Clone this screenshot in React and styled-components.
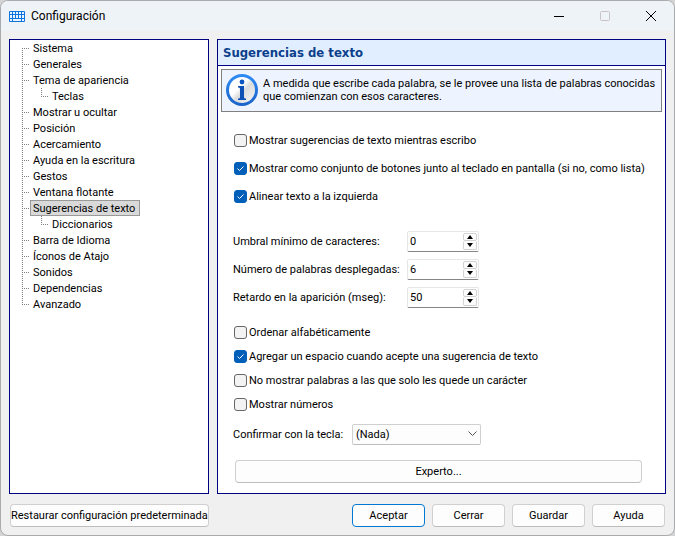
import React, { useState } from "react";
import styled, { createGlobalStyle } from "styled-components";

const GlobalStyle = createGlobalStyle`
  * {
    box-sizing: border-box;
  }

  body {
    margin: 0;
    background-color: #d4d4d4;
    font-family: Roboto, "Liberation Sans", sans-serif;
    font-size: 11px;
    line-height: 13px;
    color: #000;
  }

  button, input, select {
    font: inherit;
    color: inherit;
    margin: 0;
  }
`;

const StyledWindow = styled.div`
  min-height: 100vh;
  display: flex;
  flex-direction: column;
  background-color: #f0f0f0;
  border: 1px solid #a9abad;
  border-radius: 8px;
  overflow: hidden;
`;

const StyledTitleBar = styled.header`
  display: flex;
  align-items: center;
  height: 30px;
  padding-left: 8px;
  background-color: #eef3f8;
`;

const StyledTitle = styled.h1`
  flex: 1;
  margin: 0 0 0 6px;
  font-size: 12px;
  font-weight: 400;
  line-height: 16px;
`;

const StyledCaptionButton = styled.button`
  width: 46px;
  height: 30px;
  padding: 0;
  display: grid;
  place-items: center;
  border: 0;
  background: none;
  color: ${(props) => (props.disabled ? "#c8c2c4" : "#000")};
`;

const StyledBody = styled.main`
  flex: 1;
  display: flex;
  gap: 8px;
  padding: 8px 8px 0;
`;

const StyledTree = styled.ul`
  width: 200px;
  margin: 0;
  padding: 0 0 0 12px;
  list-style: none;
  background-color: #fff;
  border: 1px solid #000080;
`;

const StyledTreeItem = styled.li`
  display: flex;
  height: 16px;
  cursor: default;
`;

const dots = (direction) =>
  `repeating-linear-gradient(to ${direction}, #808080 0 1px, transparent 1px 2px)`;

const StyledTreeGuide = styled.span`
  width: 19px;
  background: ${dots("bottom")} 0 0 / 1px 100% no-repeat;
`;

const StyledTreeElbow = styled.span`
  width: 8px;
  background-image: ${dots("bottom")}, ${dots("right")};
  background-repeat: no-repeat;
  background-position: 0 ${(props) => (props.$shape === "first" ? "100%" : "0")}, 0 8px;
  background-size: 1px ${(props) => (props.$shape === "middle" ? "100%" : "50%")}, 100% 1px;
`;

const StyledTreeLabel = styled.span`
  padding: 0 4px 0 2px;
  line-height: 15px;
  white-space: nowrap;
  border: 1px solid ${(props) => (props.$selected ? "#999" : "transparent")};
  background-color: ${(props) => (props.$selected ? "#d9d9d9" : "transparent")};
`;

const StyledPanel = styled.section`
  flex: 1;
  min-width: 0;
  background-color: #fff;
  border: 1px solid #000080;
`;

const StyledPanelTitle = styled.h2`
  margin: 0;
  padding: 4px 5px;
  font-family: "DejaVu Sans Condensed", "DejaVu Sans", sans-serif;
  font-size: 13px;
  font-weight: 700;
  line-height: 17px;
  color: #0b3f8c;
  background-color: #e1eeff;
  border-bottom: 1px solid #000080;
`;

const StyledInfo = styled.div`
  display: flex;
  align-items: center;
  gap: 5px;
  margin: 3px;
  padding: 4px 4px 5px;
  background-color: #eef4ff;
  border: 1px solid #808080;

  > svg {
    flex: none;
  }

  > p {
    margin: 0;
  }
`;

const StyledForm = styled.form`
  display: flex;
  flex-direction: column;
  padding: 11px 15px 8px;
`;

const StyledGroup = styled.div`
  display: grid;
  grid-auto-rows: ${(props) => props.$row}px;
  margin-bottom: ${(props) => props.$gap}px;
`;

const StyledCheck = styled.label`
  display: flex;
  align-items: center;
  gap: 2px;
  margin-left: 1px;
`;

const StyledCheckMark = styled.span`
  display: grid;

  > * {
    grid-area: 1 / 1;
  }

  > input {
    appearance: none;
    width: 13px;
    height: 13px;
    border: 1px solid #666;
    border-radius: 3px;
    background-color: #f3f3f3;
  }

  > input:checked {
    border-color: #005fb8;
    background-color: #005fb8;
  }

  > svg {
    pointer-events: none;
    visibility: hidden;
  }

  > input:checked + svg {
    visibility: visible;
  }
`;

const StyledField = styled.div`
  display: grid;
  grid-template-columns: ${(props) => props.$label}px ${(props) => props.$control}px;
  align-items: center;
`;

const StyledSpin = styled.div`
  display: flex;
  height: 21px;
  padding: 1px;
  border: 1px solid #e6e6e6;
  border-bottom-color: #868686;
  border-radius: 2px;
  background-color: #fff;

  > input {
    flex: 1;
    min-width: 0;
    padding: 0 0 0 1px;
    border: 0;
    outline: 0;
    background: none;
    appearance: textfield;
  }

  > input::-webkit-inner-spin-button {
    display: none;
  }
`;

const StyledSpinButtons = styled.div`
  width: 14px;
  display: grid;
  grid-template-rows: 1fr 1fr;

  > button {
    display: grid;
    place-items: center;
    min-height: 0;
    padding: 0;
    border: 1px solid #d2d2d2;
    border-radius: 2px;
    background-color: #fdfdfd;
  }

  > button + button {
    border-top: 0;
  }
`;

const StyledSelect = styled.div`
  display: grid;
  align-items: center;

  > * {
    grid-area: 1 / 1;
  }

  > select {
    appearance: none;
    height: 21px;
    padding: 0 20px 0 3px;
    border: 1px solid #d0d0d0;
    border-bottom-color: #bdbdbd;
    border-radius: 2px;
    background-color: #fdfdfd;
  }

  > svg {
    justify-self: end;
    margin-right: 4px;
    pointer-events: none;
  }
`;

const StyledButton = styled.button`
  height: 23px;
  min-width: 73px;
  padding: 0;
  white-space: nowrap;
  border: 1px solid ${(props) => (props.$primary ? "#0078d4" : "#d0d0d0")};
  border-bottom-color: ${(props) => (props.$primary ? "#0078d4" : "#bdbdbd")};
  border-radius: 4px;
  background-color: #fdfdfd;
`;

const StyledExpertButton = styled(StyledButton)`
  margin: 0 8px 0 2px;
`;

const StyledFooter = styled.footer`
  display: flex;
  gap: 7px;
  padding: 10px 9px 8px;
`;

const StyledRestoreButton = styled(StyledButton)`
  min-width: 198px;
  margin-right: auto;
`;

const sections = [
  { name: "Sistema", shape: "first" },
  { name: "Generales", shape: "middle" },
  { name: "Tema de apariencia", shape: "middle" },
  { name: "Teclas", shape: "last", nested: true },
  { name: "Mostrar u ocultar", shape: "middle" },
  { name: "Posición", shape: "middle" },
  { name: "Acercamiento", shape: "middle" },
  { name: "Ayuda en la escritura", shape: "middle" },
  { name: "Gestos", shape: "middle" },
  { name: "Ventana flotante", shape: "middle" },
  { name: "Sugerencias de texto", shape: "middle" },
  { name: "Diccionarios", shape: "last", nested: true },
  { name: "Barra de Idioma", shape: "middle" },
  { name: "Íconos de Atajo", shape: "middle" },
  { name: "Sonidos", shape: "middle" },
  { name: "Dependencias", shape: "middle" },
  { name: "Avanzado", shape: "last" },
];

const KeyboardIcon = () => (
  <svg width="16" height="11" viewBox="0 0 16 11" aria-hidden="true">
    <rect width="16" height="11" rx="1" fill="#0f74e0" />
    <path
      d="M1 1h2v2H1zM4 1h2v2H4zM7 1h2v2H7zM10 1h2v2h-2zM13 1h2v2h-2zM1 4h2v3H1zM4 4h2v3H4zM7 4h2v3H7zM10 4h2v3h-2zM13 4h2v3h-2zM1 8h2v2H1zM4 8h8v2H4zM13 8h2v2h-2z"
      fill="#e8f4ff"
    />
  </svg>
);

const InfoIcon = () => (
  <svg width="32" height="32" viewBox="0 0 32 32" aria-hidden="true">
    <defs>
      <linearGradient id="ring" x1="0" y1="0" x2="0" y2="1">
        <stop offset="0" stopColor="#2f8cf5" />
        <stop offset="1" stopColor="#1a62c8" />
      </linearGradient>
      <linearGradient id="disc" x1="0" y1="0" x2="1" y2="1">
        <stop offset="0.4" stopColor="#fff" />
        <stop offset="0.55" stopColor="#dcdcdc" />
        <stop offset="1" stopColor="#f6f6f6" />
      </linearGradient>
    </defs>
    <circle cx="16" cy="16" r="16" fill="url(#ring)" />
    <circle cx="16" cy="16" r="13" fill="url(#disc)" />
    <circle cx="16" cy="8" r="2.4" fill="#0d55c0" />
    <path
      d="M12 12h6v11c0 1 .6 1.500 2 1.500V26h-8v-1.500c1.500 0 2-.5 2-1.500v-8c0-1-.5-1.500-2-1.500z"
      fill="#0d4fb4"
    />
  </svg>
);

const CheckOption = ({ label, defaultChecked }) => (
  <StyledCheck>
    <StyledCheckMark>
      <input type="checkbox" defaultChecked={defaultChecked} />
      <svg width="13" height="13" viewBox="0 0 13 13" aria-hidden="true">
        <path d="M3.500 6.500l2 2 4-4" fill="none" stroke="#fff" />
      </svg>
    </StyledCheckMark>
    {label}
  </StyledCheck>
);

const SpinField = ({ id, label, initial }) => {
  const [value, setValue] = useState(initial);

  return (
    <StyledField $label={174} $control={72}>
      <label htmlFor={id}>{label}</label>
      <StyledSpin>
        <input
          id={id}
          type="number"
          value={value}
          onChange={(e) => setValue(Number(e.target.value))}
        />
        <StyledSpinButtons>
          <button type="button" aria-label="Aumentar" onClick={() => setValue(value + 1)}>
            <svg width="6" height="4" viewBox="0 0 6 4">
              <path d="M3 0l3 4H0z" />
            </svg>
          </button>
          <button type="button" aria-label="Disminuir" onClick={() => setValue(value - 1)}>
            <svg width="6" height="4" viewBox="0 0 6 4">
              <path d="M3 4l3-4H0z" />
            </svg>
          </button>
        </StyledSpinButtons>
      </StyledSpin>
    </StyledField>
  );
};

const SectionTree = () => {
  const [selected, setSelected] = useState("Sugerencias de texto");

  return (
    <StyledTree role="tree">
      {sections.map(({ name, shape, nested }) => (
        <StyledTreeItem
          key={name}
          role="treeitem"
          aria-selected={name === selected}
          onClick={() => setSelected(name)}
        >
          {nested && <StyledTreeGuide />}
          <StyledTreeElbow $shape={shape} />
          <StyledTreeLabel $selected={name === selected}>{name}</StyledTreeLabel>
        </StyledTreeItem>
      ))}
    </StyledTree>
  );
};

const App = () => {
  return (
    <>
      <GlobalStyle />
      <StyledWindow>
        <StyledTitleBar>
          <KeyboardIcon />
          <StyledTitle>Configuración</StyledTitle>
          <StyledCaptionButton aria-label="Minimizar">
            <svg width="10" height="10" viewBox="0 0 10 10">
              <path d="M0 5.500h10" stroke="currentColor" />
            </svg>
          </StyledCaptionButton>
          <StyledCaptionButton aria-label="Maximizar" disabled>
            <svg width="10" height="10" viewBox="0 0 10 10">
              <rect x="0.5" y="0.5" width="9" height="9" rx="1" fill="none" stroke="currentColor" />
            </svg>
          </StyledCaptionButton>
          <StyledCaptionButton aria-label="Cerrar ventana">
            <svg width="10" height="10" viewBox="0 0 10 10">
              <path d="M0 0l10 10M10 0L0 10" stroke="currentColor" />
            </svg>
          </StyledCaptionButton>
        </StyledTitleBar>
        <StyledBody>
          <SectionTree />
          <StyledPanel>
            <StyledPanelTitle>Sugerencias de texto</StyledPanelTitle>
            <StyledInfo>
              <InfoIcon />
              <p>
                A medida que escribe cada palabra, se le provee una lista de palabras conocidas
                que comienzan con esos caracteres.
              </p>
            </StyledInfo>
            <StyledForm onSubmit={(e) => e.preventDefault()}>
              <StyledGroup $row={28} $gap={17}>
                <CheckOption label="Mostrar sugerencias de texto mientras escribo" />
                <CheckOption
                  label="Mostrar como conjunto de botones junto al teclado en pantalla (si no, como lista)"
                  defaultChecked
                />
                <CheckOption label="Alinear texto a la izquierda" defaultChecked />
              </StyledGroup>
              <StyledGroup $row={28} $gap={9}>
                <SpinField id="umbral" label="Umbral mínimo de caracteres:" initial={0} />
                <SpinField id="palabras" label="Número de palabras desplegadas:" initial={6} />
                <SpinField id="retardo" label="Retardo en la aparición (mseg):" initial={50} />
              </StyledGroup>
              <StyledGroup $row={24} $gap={4}>
                <CheckOption label="Ordenar alfabéticamente" />
                <CheckOption
                  label="Agregar un espacio cuando acepte una sugerencia de texto"
                  defaultChecked
                />
                <CheckOption label="No mostrar palabras a las que solo les quede un carácter" />
                <CheckOption label="Mostrar números" />
              </StyledGroup>
              <StyledGroup $row={28} $gap={12}>
                <StyledField $label={119} $control={129}>
                  <label htmlFor="tecla">Confirmar con la tecla:</label>
                  <StyledSelect>
                    <select id="tecla">
                      <option>(Nada)</option>
                    </select>
                    <svg width="9" height="6" viewBox="0 0 9 6">
                      <path d="M0.500 0.500l4 4 4-4" fill="none" stroke="#555" />
                    </svg>
                  </StyledSelect>
                </StyledField>
              </StyledGroup>
              <StyledExpertButton type="button">Experto...</StyledExpertButton>
            </StyledForm>
          </StyledPanel>
        </StyledBody>
        <StyledFooter>
          <StyledRestoreButton>Restaurar configuración predeterminada</StyledRestoreButton>
          <StyledButton $primary>Aceptar</StyledButton>
          <StyledButton>Cerrar</StyledButton>
          <StyledButton>Guardar</StyledButton>
          <StyledButton>Ayuda</StyledButton>
        </StyledFooter>
      </StyledWindow>
    </>
  );
};

export default App;
